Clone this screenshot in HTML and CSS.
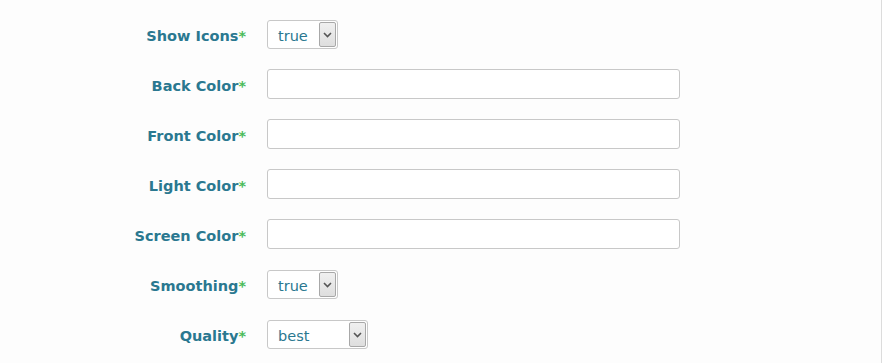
FILE: index.html
```html
<!DOCTYPE html>
<html>
<head>
    <meta charset="utf-8">
    <title>Settings</title>
    <link rel="stylesheet" href="styles.css">
</head>
<body>
    <div class="page">
        <form class="form">
            <div class="row">
                <label class="label">Show Icons<span class="req">*</span></label>
                <div class="select small">
                    <span class="value">true</span>
                    <span class="arrow"><svg width="9" height="6" viewBox="0 0 9 6"><path d="M1 1 L4.5 4.5 L8 1" fill="none" stroke="#555" stroke-width="1.6"/></svg></span>
                </div>
            </div>
            <div class="row">
                <label class="label">Back Color<span class="req">*</span></label>
                <input class="text" type="text">
            </div>
            <div class="row">
                <label class="label">Front Color<span class="req">*</span></label>
                <input class="text" type="text">
            </div>
            <div class="row">
                <label class="label">Light Color<span class="req">*</span></label>
                <input class="text" type="text">
            </div>
            <div class="row">
                <label class="label">Screen Color<span class="req">*</span></label>
                <input class="text" type="text">
            </div>
            <div class="row">
                <label class="label">Smoothing<span class="req">*</span></label>
                <div class="select small">
                    <span class="value">true</span>
                    <span class="arrow"><svg width="9" height="6" viewBox="0 0 9 6"><path d="M1 1 L4.5 4.5 L8 1" fill="none" stroke="#555" stroke-width="1.6"/></svg></span>
                </div>
            </div>
            <div class="row">
                <label class="label">Quality<span class="req">*</span></label>
                <div class="select wide">
                    <span class="value">best</span>
                    <span class="arrow"><svg width="9" height="6" viewBox="0 0 9 6"><path d="M1 1 L4.5 4.5 L8 1" fill="none" stroke="#555" stroke-width="1.6"/></svg></span>
                </div>
            </div>
        </form>
    </div>
</body>
</html>
```

FILE: styles.css
```css
body {
    margin: 0;
    background: #fff;
    font-family: "DejaVu Sans", Verdana, sans-serif;
}
.page {
    width: 881px;
    height: 363px;
    border-right: 1px solid #dcdcdc;
    background: #fdfdfd;
}
.form {
    padding-top: 19px;
}
.row {
    display: flex;
    align-items: center;
    height: 30px;
    margin-bottom: 20px;
}
.label {
    width: 267px;
    text-align: right;
    font-size: 14.5px;
    font-weight: bold;
    color: #2a7890;
    padding: 3px 21px 0 0;
    box-sizing: border-box;
}
.req {
    color: #4cbb5a;
    font-weight: bold;
}
.text {
    width: 413px;
    height: 30px;
    box-sizing: border-box;
    border: 1px solid #c8c8c8;
    border-radius: 3px;
    background: #fff;
    margin: 0;
}
.select {
    display: flex;
    align-items: stretch;
    height: 29px;
    margin-top: 1px;
    box-sizing: border-box;
    border: 1px solid #c8c8c8;
    border-radius: 3px;
    background: #fff;
    font-size: 14.5px;
    color: #2a7890;
}
.small {
    width: 71px;
}
.wide {
    width: 101px;
}
.value {
    flex: 1;
    display: flex;
    align-items: center;
    padding: 2px 0 0 10px;
}
.arrow {
    width: 17px;
    margin: 1px 1px 1px 0;
    background: linear-gradient(#f0f0f0, #dedede);
    border: 1px solid #a8a8a8;
    border-radius: 2px;
    box-sizing: border-box;
    display: flex;
    align-items: center;
    justify-content: center;
}
```
